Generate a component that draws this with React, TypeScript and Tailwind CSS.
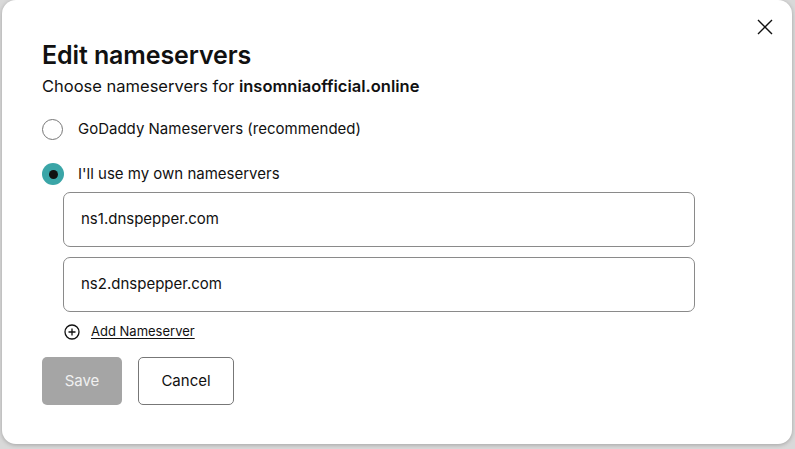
import React from "react";

export default function App() {
  return (
    <div
      className="w-[795px] h-[449px] bg-[#d9d9d9] overflow-hidden pl-[2px]"
      style={{ fontFamily: "Inter, 'Noto Sans', 'Liberation Sans', sans-serif" }}
    >
      <div className="relative w-[790px] h-[444px] bg-white rounded-[14px] shadow-[0_1px_4px_rgba(0,0,0,0.25)] pl-[40px] pt-[40px] flex flex-col text-[#111]">
        <button className="absolute right-[17px] top-[17px] w-[20px] h-[20px] flex items-center justify-center">
          <svg width="18" height="18" viewBox="0 0 18 18" fill="none" stroke="#111" strokeWidth="1.4">
            <path d="M2 2 L16 16 M16 2 L2 16" />
          </svg>
        </button>
        <h1 className="text-[25px] leading-[31px] font-semibold tracking-[-0.1px]">Edit nameservers</h1>
        <p className="mt-[4px] text-[16.5px] leading-[22px]">
          Choose nameservers for <span className="font-semibold">insomniaofficial.online</span>
        </p>
        <div className="mt-[21px] flex items-center h-[22px]">
          <span className="w-[21px] h-[21px] rounded-full border border-[#777] bg-white" />
          <span className="ml-[15px] text-[15px] leading-[20px]">GoDaddy Nameservers (recommended)</span>
        </div>
        <div className="mt-[23px] flex items-center h-[22px]">
          <span className="w-[22px] h-[22px] rounded-full bg-[#3aa5a7] flex items-center justify-center">
            <span className="w-[9px] h-[9px] rounded-full bg-[#111]" />
          </span>
          <span className="ml-[14px] text-[15px] leading-[20px]">I'll use my own nameservers</span>
        </div>
        <div className="ml-[21px] mt-[7px] flex flex-col gap-[10px] w-[632px]">
          <div className="h-[55px] rounded-[7px] border border-[#8a8a8a] flex items-center pl-[17px] text-[15px]">
            ns1.dnspepper.com
          </div>
          <div className="h-[55px] rounded-[7px] border border-[#8a8a8a] flex items-center pl-[17px] text-[15px]">
            ns2.dnspepper.com
          </div>
        </div>
        <div className="ml-[22px] mt-[11px] flex items-center h-[18px]">
          <svg width="16" height="16" viewBox="0 0 16 16" fill="none" stroke="#111" strokeWidth="1.3">
            <circle cx="8" cy="8" r="7" />
            <path d="M8 4.5 V11.5 M4.5 8 H11.5" />
          </svg>
          <span className="ml-[11px] text-[13px] underline underline-offset-2">Add Nameserver</span>
        </div>
        <div className="mt-[16px] flex gap-[16px]">
          <button className="w-[80px] h-[48px] rounded-[5px] bg-[#a5a5a5] text-[#f0f0f0] text-[15px]">Save</button>
          <button className="w-[96px] h-[48px] rounded-[5px] border border-[#777] bg-white text-[#111] text-[15px]">
            Cancel
          </button>
        </div>
      </div>
    </div>
  );
}
